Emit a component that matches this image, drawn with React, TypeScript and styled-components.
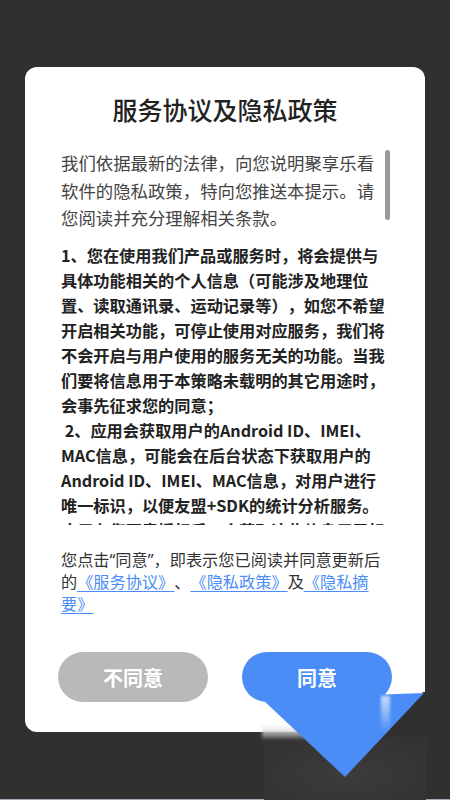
import styled, { createGlobalStyle } from 'styled-components'

const GlobalStyle = createGlobalStyle`
  html, body {
    margin: 0;
    padding: 0;
    background: #303030;
  }
  * {
    box-sizing: border-box;
    text-spacing-trim: space-all;
  }
`

const cjk = `"Noto Sans CJK SC", "Noto Sans", sans-serif`
const blue = '#4a8df6'

const Page = styled.div`
  position: relative;
  width: 450px;
  height: 800px;
  padding: 67px 25px 0;
  background: #303030;
  font-family: ${cjk};
  overflow: hidden;
`

const Card = styled.div`
  display: flex;
  flex-direction: column;
  height: 665px;
  padding: 25px 0 30px;
  background: #fff;
  border-radius: 12px;
`

const Title = styled.h1`
  margin: 0;
  height: 34px;
  line-height: 34px;
  font-size: 25px;
  font-weight: 500;
  color: #222;
  text-align: center;
`

const ScrollArea = styled.div`
  position: relative;
  height: 376px;
  margin: 23px 35px 0 36px;
  overflow: hidden;
`

const Thumb = styled.div`
  position: absolute;
  top: 1px;
  right: 0;
  width: 5px;
  height: 70px;
  border-radius: 3px;
  background: #9a9a9a;
`

const Paragraph = styled.p<{ $strong?: boolean }>`
  margin: 0 0 ${p => (p.$strong ? 0 : 11)}px;
  font-size: ${p => (p.$strong ? 16.2 : 17.4)}px;
  line-height: ${p => (p.$strong ? 25 : 27.5)}px;
  font-weight: ${p => (p.$strong ? 700 : 400)};
  color: ${p => (p.$strong ? '#222' : '#444')};
  white-space: pre;
`

const Footer = styled.p`
  margin: 24px 35px 0 36px;
  height: 66px;
  font-family: "Noto Sans", "Noto Sans CJK SC", sans-serif;
  font-size: 16.2px;
  line-height: 22px;
  color: #333;
  white-space: nowrap;
`

const Link = styled.a`
  color: ${blue};
  text-decoration: underline;
  text-decoration-thickness: 1px;
  text-underline-offset: 3px;
`

const Actions = styled.div`
  display: flex;
  justify-content: space-between;
  margin-top: 37px;
  padding: 0 33px;
`

const Button = styled.button<{ $primary?: boolean }>`
  width: 150px;
  height: 50px;
  border: none;
  border-radius: 25px;
  background: ${p => (p.$primary ? blue : '#b9b9b9')};
  color: #fff;
  font-family: ${cjk};
  font-size: 20px;
  font-weight: 700;
`

const Overlay = styled.svg`
  position: absolute;
  inset: 0;
  pointer-events: none;
`

const intro = [
  '我们依据最新的法律，向您说明聚享乐看',
  '软件的隐私政策，特向您推送本提示。请',
  '您阅读并充分理解相关条款。',
]

const terms = [
  '1、您在使用我们产品或服务时，将会提供与',
  '具体功能相关的个人信息（可能涉及地理位',
  '置、读取通讯录、运动记录等），如您不希望',
  '开启相关功能，可停止使用对应服务，我们将',
  '不会开启与用户使用的服务无关的功能。当我',
  '们要将信息用于本策略未载明的其它用途时，',
  '会事先征求您的同意；',
  ' 2、应用会获取用户的Android ID、IMEI、',
  'MAC信息，可能会在后台状态下获取用户的',
  'Android ID、IMEI、MAC信息，对用户进行',
  '唯一标识，以便友盟+SDK的统计分析服务。',
  '应用在您同意授权后，会获取这些信息用于标',
]

export default function App() {
  return (
    <Page>
      <GlobalStyle />
      <Card>
        <Title>服务协议及隐私政策</Title>
        <ScrollArea>
          <Paragraph>{intro.join('\n')}</Paragraph>
          <Paragraph $strong>{terms.join('\n')}</Paragraph>
          <Thumb />
        </ScrollArea>
        <Footer>
          您点击“同意”，即表示您已阅读并同意更新后
          <br />
          的<Link>《服务协议》</Link>、<Link>《隐私政策》</Link>及<Link>《隐私摘</Link>
          <br />
          <Link>要》</Link>
        </Footer>
        <Actions>
          <Button>不同意</Button>
          <Button $primary>同意</Button>
        </Actions>
      </Card>

      {/* pointer artefact over the bottom-right corner */}
      <Overlay width="450" height="800" viewBox="0 0 450 800">
        <defs>
          <linearGradient id="glow" x1="0" y1="0" x2="0" y2="1">
            <stop offset="0" stopColor="#fff" stopOpacity="0.7" />
            <stop offset="1" stopColor="#fff" stopOpacity="0" />
          </linearGradient>
          <linearGradient id="fade" x1="0" y1="0" x2="0" y2="1">
            <stop offset="0" stopColor="#fff" stopOpacity="0" />
            <stop offset="0.5" stopColor="#ddd" stopOpacity="0.8" />
            <stop offset="1" stopColor="#303030" stopOpacity="1" />
          </linearGradient>
          <radialGradient id="floor" cx="0.5" cy="0.6" r="0.6">
            <stop offset="0" stopColor="#3c3c3c" />
            <stop offset="1" stopColor="#333" />
          </radialGradient>
          <filter id="soft" x="-20%" y="-20%" width="140%" height="140%">
            <feGaussianBlur stdDeviation="1.5" />
          </filter>
        </defs>
        <rect x="264" y="732" width="162" height="68" fill="url(#floor)" />
        <polygon points="423,692 427,692 427,737 382,737" fill="#303030" />
        <rect x="262" y="722" width="44" height="18" fill="url(#fade)" filter="url(#soft)" />
        <polygon points="262,699 424,693 345,777" fill={blue} />
        <rect x="381" y="696" width="9" height="36" fill="url(#glow)" filter="url(#soft)" />
        <rect x="0" y="799" width="264" height="1" fill="#a9a7b9" />
        <rect x="426" y="799" width="24" height="1" fill="#a9a7b9" />
      </Overlay>
    </Page>
  )
}
